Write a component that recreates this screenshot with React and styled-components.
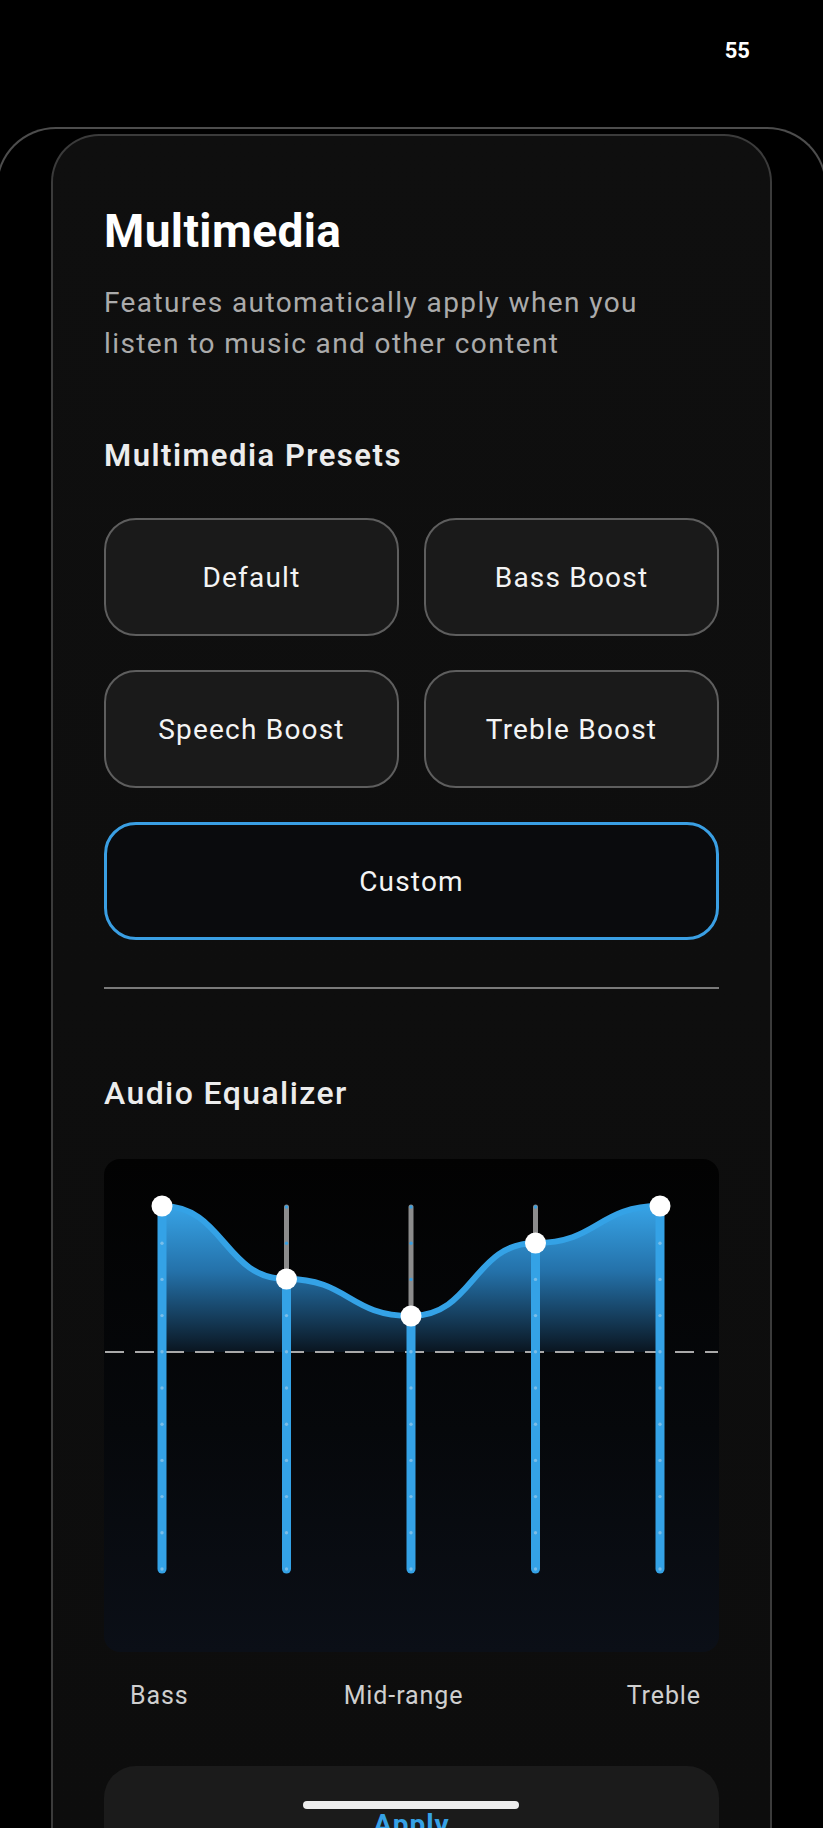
import React, { useState } from 'react';
import styled, { createGlobalStyle } from 'styled-components';

const GlobalStyle = createGlobalStyle`
  html, body {
    margin: 0;
    padding: 0;
    background: #000;
    overflow: hidden;
  }
  body {
    font-family: Roboto, "Noto Sans", "Liberation Sans", sans-serif;
    -webkit-font-smoothing: antialiased;
  }
  * {
    box-sizing: border-box;
  }
`;

const Screen = styled.div`
  position: relative;
  width: 823px;
  height: 1828px;
  overflow: hidden;
  background: #000;
`;

const StatusBar = styled.div`
  height: 127px;
  display: flex;
  justify-content: flex-end;
  align-items: flex-start;
  padding: 38px 73px 0 0;
  color: #fff;
  font-size: 22px;
  line-height: 26px;
  font-weight: 700;
`;

// the outer sheet is a bit wider than the screen, so its sides run off the edges
const Sheet = styled.div`
  margin: 0 -4px;
  border: 2px solid #4d4d4d;
  border-bottom: none;
  border-radius: 60px 60px 0 0;
  padding: 5px 53px 0;
  background: #000;
  height: 1701px;
`;

const Card = styled.div`
  height: 100%;
  border: 2px solid #3b3b3b;
  border-bottom: none;
  border-radius: 48px 48px 0 0;
  padding: 68px 51px 0;
  background: linear-gradient(180deg, #0f0f0f 0%, #0d0d0d 100%);
`;

const Title = styled.h1`
  margin: 0;
  font-size: 46px;
  line-height: 54px;
  font-weight: 700;
  letter-spacing: 0.4px;
  color: #fff;
`;

const Subtitle = styled.p`
  margin: 24px 0 0;
  font-size: 28px;
  line-height: 41px;
  letter-spacing: 1.4px;
  color: #ababab;
`;

const SectionTitle = styled.h2`
  margin: ${(p) => p.$top}px 0 0;
  font-size: ${(p) => p.$size}px;
  line-height: 36px;
  font-weight: ${(p) => p.$weight};
  letter-spacing: ${(p) => p.$spacing}px;
  color: #ececec;
`;

const PresetGrid = styled.div`
  margin-top: 44px;
  display: grid;
  grid-template-columns: 1fr 1fr;
  column-gap: 25px;
  row-gap: 34px;
`;

const PresetButton = styled.button`
  grid-column: ${(p) => (p.$wide ? '1 / span 2' : 'auto')};
  height: 118px;
  border-radius: 32px;
  border: ${(p) => (p.$active ? '3px solid #3a9fe3' : '2px solid #5e5e5e')};
  background: ${(p) => (p.$active ? '#0a0b0d' : '#1a1a1a')};
  color: #f4f4f4;
  font-family: inherit;
  font-size: 28px;
  letter-spacing: 1.2px;
  cursor: pointer;
`;

const Divider = styled.div`
  margin-top: 47px;
  height: 2px;
  background: #7a7a7a;
`;

const EqPanel = styled.div`
  margin-top: 48px;
  height: 493px;
  border-radius: 16px;
  overflow: hidden;
  background: linear-gradient(180deg, #020202 0%, #06080b 55%, #0b0f17 100%);

  svg {
    display: block;
  }
`;

const BandLabels = styled.div`
  margin-top: 29px;
  display: grid;
  grid-template-columns: 1fr auto 1fr;
  padding: 0 18px 0 26px;
  font-size: 25px;
  line-height: 30px;
  letter-spacing: 0.9px;
  color: #cfcfcf;

  span:nth-child(2) {
    margin-right: 24px;
  }
  span:last-child {
    justify-self: end;
  }
`;

const ApplyButton = styled.button`
  margin-top: 55px;
  width: 100%;
  height: 100px;
  border: none;
  border-radius: 32px;
  background: #1b1b1b;
  color: #36a2e6;
  font-family: inherit;
  font-size: 28px;
  font-weight: 700;
  letter-spacing: 1px;
  padding-top: 18px;
`;

const HomeIndicator = styled.div`
  position: absolute;
  left: 303px;
  top: 1801px;
  width: 216px;
  height: 8px;
  border-radius: 4px;
  background: #eeeeee;
`;

const BLUE = '#34a2e6';
const TOP = 48;
const BOTTOM = 410;
const ZERO = 193;
const STEP = (BOTTOM - TOP) / 10;

const bands = [
  { x: 58, y: 47 },
  { x: 182.5, y: 120 },
  { x: 307, y: 157 },
  { x: 431.5, y: 84 },
  { x: 556, y: 47 },
];

function curvePath(pts) {
  let d = `M${pts[0].x},${pts[0].y}`;
  for (let i = 1; i < pts.length; i++) {
    const a = pts[i - 1];
    const b = pts[i];
    const h = (b.x - a.x) / 2;
    d += ` C${a.x + h},${a.y} ${b.x - h},${b.y} ${b.x},${b.y}`;
  }
  return d;
}

function Equalizer() {
  const line = curvePath(bands);
  const first = bands[0];
  const last = bands[bands.length - 1];
  const area = `M${first.x},${ZERO} L${first.x},${first.y} ${line.slice(line.indexOf('C'))} L${last.x},${ZERO} Z`;

  return (
    <svg width="614" height="493" viewBox="0 0 614 493">
      <defs>
        <linearGradient id="eqFill" x1="0" y1="47" x2="0" y2={ZERO} gradientUnits="userSpaceOnUse">
          <stop offset="0" stopColor="#37a3e6" />
          <stop offset="0.45" stopColor="#2471a9" />
          <stop offset="1" stopColor="#0a1520" />
        </linearGradient>
      </defs>

      <path d={area} fill="url(#eqFill)" />

      <line x1="0" y1={ZERO} x2="614" y2={ZERO} stroke="#a9a9a9" strokeWidth="2" strokeDasharray="19 11" strokeDashoffset="-1" />

      {bands.map((b) => (
        <g key={b.x}>
          {b.y > TOP && (
            <line x1={b.x} y1={TOP} x2={b.x} y2={b.y} stroke="#8c8c8c" strokeWidth="5" strokeLinecap="round" />
          )}
          <line x1={b.x} y1={Math.max(b.y, TOP)} x2={b.x} y2={BOTTOM} stroke={BLUE} strokeWidth="9" strokeLinecap="round" />
        </g>
      ))}

      <path d={line} fill="none" stroke={BLUE} strokeWidth="6" strokeLinecap="round" />

      {bands.map((b) =>
        Array.from({ length: 11 }, (_, i) => {
          const y = TOP + i * STEP;
          const onGray = y < b.y - 4;
          return (
            <circle
              key={`${b.x}-${i}`}
              cx={b.x}
              cy={y}
              r="1.7"
              fill={onGray ? '#3a9fe0' : 'rgba(190,215,235,0.5)'}
            />
          );
        })
      )}

      {bands.map((b) => (
        <circle key={`k${b.x}`} cx={b.x} cy={b.y} r="10.5" fill="#fff" />
      ))}
    </svg>
  );
}

const presets = ['Default', 'Bass Boost', 'Speech Boost', 'Treble Boost'];

export default function App() {
  const [active, setActive] = useState('Custom');

  return (
    <Screen>
      <GlobalStyle />
      <StatusBar>55</StatusBar>
      <Sheet>
        <Card>
          <Title>Multimedia</Title>
          <Subtitle>
            Features automatically apply when you
            <br />
            listen to music and other content
          </Subtitle>

          <SectionTitle $top={74} $size={31} $weight={600} $spacing={1.5}>
            Multimedia Presets
          </SectionTitle>

          <PresetGrid>
            {presets.map((p) => (
              <PresetButton key={p} $active={active === p} onClick={() => setActive(p)}>
                {p}
              </PresetButton>
            ))}
            <PresetButton $wide $active={active === 'Custom'} onClick={() => setActive('Custom')}>
              Custom
            </PresetButton>
          </PresetGrid>

          <Divider />

          <SectionTitle $top={86} $size={32} $weight={500} $spacing={1.4}>
            Audio Equalizer
          </SectionTitle>

          <EqPanel>
            <Equalizer />
          </EqPanel>

          <BandLabels>
            <span>Bass</span>
            <span>Mid-range</span>
            <span>Treble</span>
          </BandLabels>

          <ApplyButton>Apply</ApplyButton>
        </Card>
      </Sheet>
      <HomeIndicator />
    </Screen>
  );
}
